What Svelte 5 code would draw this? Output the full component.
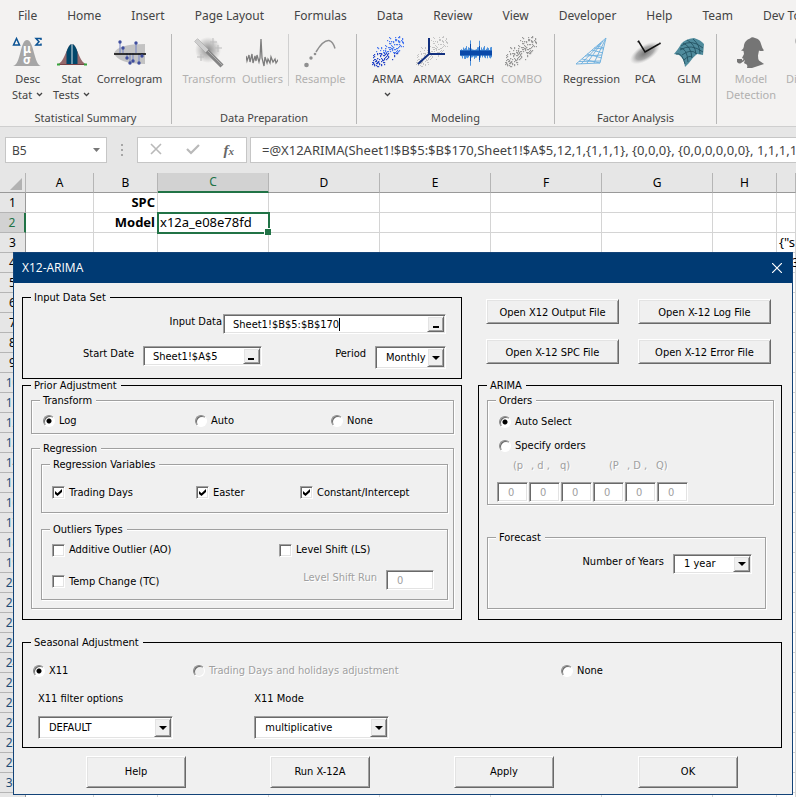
<script>
  const tabs = [
    "File",
    "Home",
    "Insert",
    "Page Layout",
    "Formulas",
    "Data",
    "Review",
    "View",
    "Developer",
    "Help",
    "Team",
    "Dev Tools",
  ];

  const groups = [
    {
      name: "Statistical Summary",
      items: [
        { lines: ["Desc", "Stat"], icon: "desc", menu: true },
        { lines: ["Stat", "Tests"], icon: "tests", menu: true },
        { lines: ["Correlogram"], icon: "correlogram" },
      ],
    },
    {
      name: "Data Preparation",
      items: [
        { lines: ["Transform"], icon: "wand", off: true },
        { lines: ["Outliers"], icon: "outliers", off: true },
        { lines: ["Resample"], icon: "resample", off: true, split: true },
      ],
    },
    {
      name: "Modeling",
      items: [
        { lines: ["ARMA", ""], icon: "arma", menu: true },
        { lines: ["ARMAX"], icon: "armax" },
        { lines: ["GARCH"], icon: "garch" },
        { lines: ["COMBO"], icon: "combo", off: true },
      ],
    },
    {
      name: "Factor Analysis",
      items: [
        { lines: ["Regression"], icon: "regression" },
        { lines: ["PCA"], icon: "pca" },
        { lines: ["GLM"], icon: "glm" },
      ],
    },
    {
      name: "",
      items: [
        { lines: ["Model", "Detection"], icon: "holmes", off: true },
        { lines: ["Diagnosis"], icon: "diagnosis", off: true },
      ],
    },
  ];

  const columns = ["A", "B", "C", "D", "E", "F", "G", "H", ""];
  const cells = {
    B1: "SPC",
    B2: "Model",
    C2: "x12a_e08e78fd",
    3: '{"s',
    4: "3",
  };
  const rowNumbers = Array.from({ length: 31 }, (_, i) => i + 1);

  // small fixed-seed generator, so the icons look the same on every load
  function random(seed) {
    let s = seed;
    return () => {
      s = (s * 16807) % 2147483647;
      return s / 2147483647;
    };
  }

  function scatter(seed, count) {
    const next = random(seed);
    const dots = [];
    while (dots.length < count) {
      const x = next() * 31;
      const spread = (next() + next() - 1) * 15;
      const y = 27 - x * 0.85 + spread;
      if (y > 0 && y < 31) dots.push({ x: Math.round(x), y: Math.round(y) });
    }
    return dots;
  }

  function noise(seed) {
    const next = random(seed);
    let d = "";
    for (let x = 0; x < 32; x++) {
      const spike = x === 10 ? 9 : x === 19 ? 8 : 0;
      const up = 2 + next() * 4 + spike;
      const down = 3 + next() * 4 + spike * 0.8;
      d += `M${x + 0.5} ${16 - up}V${16 + down}`;
    }
    return d;
  }

  const dots = scatter(4217, 165);
  const wave = noise(77);

  let transform = "Log";
  let orders = "auto";
  let seasonal = "X11";
  let inputData = "Sheet1!$B$5:$B$170";
  let startDate = "Sheet1!$A$5";
</script>

<div class="window">
  <header class="ribbon">
    <nav>
      {#each tabs as tab}
        <button class="tab">{tab}</button>
      {/each}
    </nav>
    <div class="groups">
      {#each groups as group}
        <section class="group">
          <div class="items">
            {#each group.items as item}
              <button class="item" class:split={item.split} disabled={item.off}>
                <svg width="32" height="32" viewBox="0 0 32 32" aria-hidden="true">
                  {#if item.icon === "desc"}
                    <path d="M1 30C9 29 8 4 15 4s7 25 14 26z" fill="#a6a6a6" />
                    <path d="M1.500 9 4.500 2.500 7.500 9z" fill="none" stroke="#0b5394" stroke-width="1.500" />
                    <path d="M29 4V2.500H24l3 3.300-3 3.200h5V7.500" fill="none" stroke="#0b5394" stroke-width="1.500" />
                    <text x="15" y="17" class="greek">μ</text>
                    <text x="15" y="28" class="greek">σ</text>
                  {:else if item.icon === "tests"}
                    <path d="M2 28C9 26 11 8 16 8s7 18 14 20z" fill="#96696c" />
                    <path d="M10.500 28V16Q13 8 16 8t5.500 8v12z" fill="#00476b" />
                    <path d="M16 8v20" stroke="#d8e4ea" />
                    <path d="M2 28.500h28" stroke="#7a4448" />
                    <path d="M1 28.500h3M28 28.500h3" stroke="#37a33c" stroke-width="2" />
                  {:else if item.icon === "correlogram"}
                    <path d="M0 17Q4 8 31 8V28Q4 28 0 17z" fill="#c3c3c3" />
                    <path d="M6 7v10M9 13v4M22 8v9M13 17v4M16 17v9M19 17v7M25 17v9M28 17v2" stroke="#7483c4" />
                    <path d="M0 18h32" stroke="#000" stroke-width="1.500" />
                    {#each [[6, 6], [9, 12], [22, 7], [13, 22], [16, 27], [19, 25], [25, 27], [28, 20]] as [x, y]}
                      <circle cx={x} cy={y} r="1.700" fill="#3f4e9e" />
                    {/each}
                  {:else if item.icon === "wand"}
                    <defs>
                      <radialGradient id="glow">
                        <stop offset="0" stop-color="#8c8c8c" />
                        <stop offset="1" stop-color="#8c8c8c" stop-opacity="0" />
                      </radialGradient>
                    </defs>
                    <circle cx="15" cy="14" r="13" fill="url(#glow)" />
                    <path d="M20 2v8M17 6h7M25 9v7M22 12h7M8 18v7M4 21h7" stroke="#bdbdbd" />
                    <path d="M3 4 29 30" stroke="#858585" stroke-width="4.500" />
                    <path d="M3 4 14 15" stroke="#cfcfcf" stroke-width="4" />
                    <path d="M14 14 29 29" stroke="#b0b0b0" />
                  {:else if item.icon === "outliers"}
                    <path
                      d="M0 20l1 5 2-6 1 7 2-8 1 9 2-7 1 5 1-6 2 7 1-4 1-19 1 19 2 8 1-9 2 6 1-4 2 4 1-6 2 5 2-3 1 4 2-3 2 2"
                      fill="none"
                      stroke="#7d7d7d"
                      stroke-width="1.300"
                    />
                  {:else if item.icon === "resample"}
                    <path d="M12 16Q19 4 25 4.500q4 1 6 8" fill="none" stroke="#8f8f8f" stroke-width="1.500" />
                    <circle cx="2.500" cy="29" r="2.300" fill="#8f8f8f" />
                    <circle cx="7" cy="22" r="1.700" fill="#8f8f8f" />
                    <circle cx="11" cy="18" r="1.300" fill="#8f8f8f" />
                  {:else if item.icon === "arma" || item.icon === "combo"}
                    {#each dots as dot}
                      <rect
                        x={dot.x}
                        y={dot.y}
                        width="1.200"
                        height="1.200"
                        fill={item.icon === "combo" ? "#999" : dot.y > 16 ? "#2948c8" : "#4a7af0"}
                      />
                    {/each}
                  {:else if item.icon === "armax"}
                    {#each dots as dot}
                      <rect x={dot.x} y={dot.y} width="1" height="1" fill="#c4c4c4" />
                    {/each}
                    <path d="M13 2v16h16M13 18 2 28" fill="none" stroke="#12307f" stroke-width="2" />
                  {:else if item.icon === "garch"}
                    <path d={wave} stroke="#4f93dc" />
                    <path d="M0 17h32" stroke="#0a48a8" stroke-width="5" />
                    <path d="M10.500 8v17M19.500 10v14" stroke="#0a48a8" />
                  {:else if item.icon === "regression"}
                    <path
                      d="M1 28 31 2 25 27zM7 23l18 4M12 18l15 4M17 14l11 3M22 10l7 2M6 28l20-21M12 27 28 5M19 27 30 4M4 25.500l22-.5M10 20l17-1M19 12l10 1"
                      fill="none"
                      stroke="#6aaede"
                      stroke-width=".9"
                    />
                  {:else if item.icon === "pca"}
                    <defs>
                      <radialGradient id="cloud">
                        <stop offset="0" stop-color="#777" />
                        <stop offset=".6" stop-color="#aaa" />
                        <stop offset="1" stop-color="#ccc" stop-opacity="0" />
                      </radialGradient>
                    </defs>
                    <ellipse cx="16" cy="17" rx="17" ry="8" fill="url(#cloud)" transform="rotate(-32 16 17)" />
                    <path d="M10 6l6 10 14-8" fill="none" stroke="#111" stroke-width="1.500" />
                    <path d="M10 4l-2 2 3 1zM31 6l-2 3 3-1z" fill="#111" />
                  {:else if item.icon === "glm"}
                    <path d="M1 18Q6 12 8 8 12 3 21 2q7 2 10 6l-1 11-6-1q-5 4-8 9l-4 4q-1-9-6-12z" fill="#4f8b9c" />
                    <path
                      d="M3 18q6-2 9 10M7 12q7 0 8 14M10 7q8 3 9 15M14 4q8 4 9 14M20 3q7 6 7 15M8 10Q18 2 30 12M7 14Q18 7 30 16M9 19Q18 12 24 18M11 24q5-5 8-3"
                      fill="none"
                      stroke="#1f4c5c"
                      stroke-width=".8"
                    />
                  {:else if item.icon === "holmes"}
                    <path
                      d="M6 14.500Q9 13 9 9q1-5 6-6.500 2-2 5-.5 5 1 6 6 1 4 3 6.500-3 1-5 0l-1 5q0 4 1 5l5 3.500L17 32h-5q1-3-1-4-2 0-2-2l1-1-1-2-2-1 2-4-.5-3z"
                      fill="#757575"
                    />
                    <path d="M10 22.500Q7 27 5 25" fill="none" stroke="#757575" stroke-width="1.500" />
                    <path d="M2 23h5v3q-2 3-5 0z" fill="#757575" />
                  {:else}
                    <circle cx="5" cy="5" r="4" fill="none" stroke="#b5b5b5" stroke-width="2" />
                    <path d="M2 25h7M2 29h9" stroke="#c5c5c5" stroke-width="2" />
                  {/if}
                </svg>
                {#each item.lines as line, i}
                  <span class="line">
                    {line}
                    {#if item.menu && i === item.lines.length - 1}
                      <svg width="7" height="5" viewBox="0 0 7 5" aria-hidden="true">
                        <path d="M1 1l2.500 2.500L6 1" fill="none" stroke="#444" stroke-width="1.300" />
                      </svg>
                    {/if}
                  </span>
                {/each}
              </button>
            {/each}
          </div>
          <h2>{group.name}</h2>
        </section>
      {/each}
    </div>
  </header>

  <div class="formula-bar">
    <button class="name-box">
      B5
      <svg width="7" height="4" viewBox="0 0 7 4" aria-hidden="true"><path d="M0 0h7L3.500 4z" fill="#777" /></svg>
    </button>
    <svg class="grip" width="2" height="12" viewBox="0 0 2 12" aria-hidden="true">
      <path d="M0 0h2v2H0zM0 5h2v2H0zM0 10h2v2H0z" fill="#a6a6a6" />
    </svg>
    <div class="entry">
      <button aria-label="Cancel">
        <svg width="12" height="12" viewBox="0 0 12 12"><path d="M1 1l10 10M11 1 1 11" stroke="#b9b9b9" stroke-width="1.600" /></svg>
      </button>
      <button aria-label="Enter">
        <svg width="14" height="12" viewBox="0 0 14 12"><path d="M1 6l4 4 8-8" fill="none" stroke="#b9b9b9" stroke-width="2.200" /></svg>
      </button>
      <button class="fx" aria-label="Insert function">f<small>x</small></button>
    </div>
    <input
      class="formula"
      aria-label="Formula"
      value={"=@X12ARIMA(Sheet1!$B$5:$B$170,Sheet1!$A$5,12,1,{1,1,1}, {0,0,0}, {0,0,0,0,0,0}, 1,1,1,1)"}
    />
  </div>

  <main>
    <table>
      <colgroup>
        <col class="w-head" />
        <col class="w-a" />
        <col class="w-b" />
        <col class="w-wide" span="5" />
        <col class="w-b" />
        <col />
      </colgroup>
      <thead>
        <tr>
          <th class="corner">
            <svg width="12" height="12" viewBox="0 0 12 12" aria-hidden="true"><path d="M12 0v12H0z" fill="#b2b2b2" /></svg>
          </th>
          {#each columns as column}
            <th class:current={column === "C"}>{column}</th>
          {/each}
        </tr>
      </thead>
      <tbody>
        {#each rowNumbers as row}
          <tr>
            <th class:current={row === 2} class:filtered={row > 9}>{row}</th>
            {#each columns as column}
              <td
                class:bold={column === "B"}
                class:selected={column === "C" && row === 2}
                class:far={column === "" && row === 4}>{cells[column + row] ?? ""}</td
              >
            {/each}
          </tr>
        {/each}
      </tbody>
    </table>
  </main>

  <form class="dialog" on:submit|preventDefault>
    <div class="title">
      <h1>X12-ARIMA</h1>
      <button type="button" aria-label="Close">
        <svg width="10" height="10" viewBox="0 0 10 10"><path d="M0 0l10 10M10 0 0 10" stroke="#fff" stroke-width="1.200" /></svg>
      </button>
    </div>

    <div class="body">
      <fieldset class="input-set">
        <legend>Input Data Set</legend>
        <div class="row end">
          <label for="input-data">Input Data</label>
          <div class="sunken ref wide">
            <input id="input-data" class="typing" bind:value={inputData} />
            <i class="caret"></i>
            <button type="button" class="raised pick" aria-label="Select range"><i></i></button>
          </div>
        </div>
        <div class="row between">
          <div class="row start-date">
            <label for="start-date">Start Date</label>
            <div class="sunken ref short">
              <input id="start-date" bind:value={startDate} />
              <button type="button" class="raised pick" aria-label="Select cell"><i></i></button>
            </div>
          </div>
          <div class="row period">
            <label for="period">Period</label>
            <div class="sunken combo small">
              <select id="period"><option>Monthly</option><option>Quarterly</option></select>
              <span class="raised drop"></span>
            </div>
          </div>
        </div>
      </fieldset>

      <div class="files">
        <button type="button" class="raised">Open X12 Output File</button>
        <button type="button" class="raised">Open X-12 Log File</button>
        <button type="button" class="raised">Open X-12 SPC File</button>
        <button type="button" class="raised">Open X-12 Error File</button>
      </div>

      <fieldset class="prior">
        <legend>Prior Adjustment</legend>
        <fieldset class="etched transform">
          <legend>Transform</legend>
          {#each ["Log", "Auto", "None"] as option}
            <label><input type="radio" name="transform" value={option} bind:group={transform} />{option}</label>
          {/each}
        </fieldset>
        <fieldset class="etched regression">
          <legend>Regression</legend>
          <fieldset class="etched variables">
            <legend>Regression Variables</legend>
            <label><input type="checkbox" checked />Trading Days</label>
            <label><input type="checkbox" checked />Easter</label>
            <label><input type="checkbox" checked />Constant/Intercept</label>
          </fieldset>
          <fieldset class="etched types">
            <legend>Outliers Types</legend>
            <label><input type="checkbox" />Additive Outlier (AO)</label>
            <label><input type="checkbox" />Level Shift (LS)</label>
            <label><input type="checkbox" />Temp Change (TC)</label>
            <div class="row run">
              <label class="off" for="run">Level Shift Run</label>
              <input id="run" class="sunken number" value="0" disabled />
            </div>
          </fieldset>
        </fieldset>
      </fieldset>

      <fieldset class="arima">
        <legend>ARIMA</legend>
        <fieldset class="etched orders">
          <legend>Orders</legend>
          <label><input type="radio" name="orders" value="auto" bind:group={orders} />Auto Select</label>
          <label><input type="radio" name="orders" value="specify" bind:group={orders} />Specify orders</label>
          <div class="names off">
            <span>(p</span><span>, d ,</span><span>q)</span><span>(P</span><span>, D ,</span><span>Q)</span>
          </div>
          <div class="numbers">
            {#each ["p", "d", "q", "P", "D", "Q"] as name}
              <input class="sunken number" aria-label={name} value="0" disabled />
            {/each}
          </div>
        </fieldset>
        <fieldset class="etched forecast">
          <legend>Forecast</legend>
          <div class="row end">
            <label for="years">Number of Years</label>
            <div class="sunken combo years">
              <select id="years"><option>1 year</option><option>2 years</option></select>
              <span class="raised drop"></span>
            </div>
          </div>
        </fieldset>
      </fieldset>

      <fieldset class="seasonal">
        <legend>Seasonal Adjustment</legend>
        <div class="methods">
          <label><input type="radio" name="seasonal" value="X11" bind:group={seasonal} />X11</label>
          <label class="off">
            <input type="radio" name="seasonal" value="holidays" bind:group={seasonal} disabled />Trading Days and holidays
            adjustment
          </label>
          <label><input type="radio" name="seasonal" value="None" bind:group={seasonal} />None</label>
        </div>
        <div class="options">
          <div>
            <label for="filter">X11 filter options</label>
            <div class="sunken combo">
              <select id="filter"><option>DEFAULT</option></select>
              <span class="raised drop"></span>
            </div>
          </div>
          <div>
            <label for="mode">X11 Mode</label>
            <div class="sunken combo">
              <select id="mode"><option>multiplicative</option><option>additive</option></select>
              <span class="raised drop"></span>
            </div>
          </div>
        </div>
      </fieldset>
    </div>

    <footer>
      <button type="button" class="raised">Help</button>
      <button type="button" class="raised">Run X-12A</button>
      <button type="button" class="raised">Apply</button>
      <button type="submit" class="raised">OK</button>
    </footer>
  </form>
</div>

<style>
  :global(body) {
    margin: 0;
    background: #fff;
  }

  * {
    box-sizing: border-box;
  }

  button,
  input,
  select {
    font: inherit;
    color: inherit;
    margin: 0;
    padding: 0;
    border: none;
    border-radius: 0;
    background: none;
    outline: none;
  }

  .window {
    position: relative;
    height: 100vh;
    overflow: hidden;
    font-family: "Noto Sans", "Open Sans", sans-serif;
    font-size: 12px;
    color: #444;
  }

  /* ribbon */
  .ribbon {
    background: #f3f2f1;
    border-bottom: 1px solid #cfcfcf;
    padding-bottom: 2px;
  }

  nav {
    display: flex;
    gap: 30px;
    padding-left: 18px;
    height: 34px;
  }

  .tab {
    height: 31px;
    white-space: nowrap;
  }

  .groups {
    display: grid;
    grid-template-columns: 172px 185px 198px 162px 1fr;
    height: 90px;
  }

  .group {
    display: flex;
    flex-direction: column;
    justify-content: space-between;
    border-right: 1px solid #b8b8b8;
    min-width: 0;
  }

  .group:last-child {
    border-right: none;
  }

  .items {
    display: flex;
    justify-content: center;
    gap: 4px;
    font-size: 11px;
  }

  .group:last-child .items {
    justify-content: flex-start;
    gap: 8px;
    padding-left: 8px;
  }

  .item {
    display: flex;
    flex: none;
    flex-direction: column;
    align-items: center;
    min-width: 40px;
    padding: 2px 1px 0;
  }

  .item > svg {
    flex: none;
  }

  .item:disabled {
    color: #b1b0af;
  }

  .item.split {
    padding-left: 6px;
    border-left: 1px solid #d0d0d0;
  }

  .greek {
    fill: #fff;
    font-size: 12px;
    font-weight: 700;
    text-anchor: middle;
  }

  .line {
    display: flex;
    align-items: center;
    gap: 4px;
    height: 16px;
    margin-top: 2px;
    white-space: nowrap;
  }

  .item .line + .line {
    margin-top: 0;
  }

  h2 {
    margin: 0;
    font-size: 11px;
    line-height: 12px;
    font-weight: 400;
    text-align: center;
  }

  /* formula bar */
  .formula-bar {
    display: flex;
    align-items: center;
    height: 46px;
    padding-left: 5px;
    background: #e6e6e6;
    font-size: 13px;
  }

  .name-box,
  .entry,
  .formula {
    height: 26px;
    background: #fff;
    border: 1px solid #c6c6c6;
  }

  .name-box {
    display: flex;
    align-items: center;
    justify-content: space-between;
    width: 102px;
    padding: 0 6px;
    font-size: 12px;
  }

  .grip {
    margin: 0 14px;
  }

  .entry {
    display: flex;
    align-items: center;
    justify-content: space-around;
    width: 110px;
    margin-right: 3px;
  }

  .fx {
    font-family: "Liberation Serif", serif;
    font-style: italic;
    font-weight: 700;
    font-size: 15px;
    line-height: 20px;
    color: #666;
  }

  .fx small {
    font-size: 11px;
  }

  .formula {
    flex: 1;
    min-width: 0;
    padding-left: 11px;
    border-right: none;
  }

  /* sheet */
  main {
    overflow: hidden;
  }

  table {
    width: 100%;
    table-layout: fixed;
    border-collapse: separate;
    border-spacing: 0;
    font-size: 13px;
    color: #000;
  }

  .w-head {
    width: 26px;
  }

  .w-a {
    width: 68px;
  }

  .w-b {
    width: 64px;
  }

  .w-wide {
    width: 111px;
  }

  th,
  td {
    height: 20px;
    padding: 0 2px;
    line-height: 19px;
    border-right: 1px solid #d4d4d4;
    border-bottom: 1px solid #d4d4d4;
    white-space: nowrap;
  }

  th {
    padding: 0;
    font-size: 12px;
    font-weight: 400;
    background: #e6e6e6;
    border-color: #b5b5b5;
  }

  thead th {
    border-bottom-color: #999;
  }

  tbody th {
    border-right-color: #999;
  }

  thead th.current {
    background: #d2d2d2;
    color: #217346;
    border-bottom: 2px solid #217346;
    line-height: 18px;
  }

  tbody th.current {
    background: #d2d2d2;
    color: #217346;
    border-right: 2px solid #217346;
  }

  th.filtered {
    color: #1f4e79;
  }

  .corner svg {
    display: block;
    margin: 2px 3px 0 auto;
  }

  td.bold {
    font-weight: 700;
    text-align: right;
  }

  td.selected {
    position: relative;
    outline: 2px solid #217346;
    outline-offset: -1px;
  }

  td.selected::after {
    content: "";
    position: absolute;
    right: -3px;
    bottom: -3px;
    width: 6px;
    height: 6px;
    background: #217346;
    border: 1px solid #fff;
    border-right: none;
    border-bottom: none;
  }

  td.far {
    padding-left: 15px;
  }

  /* dialog */
  .dialog {
    position: absolute;
    top: 252px;
    left: 13px;
    right: 3px;
    border: 1px solid #134378;
    background: #f0f0f0;
    font-family: "DejaVu Sans Condensed", "DejaVu Sans", sans-serif;
    font-size: 11px;
    line-height: 14px;
    color: #000;
  }

  .title {
    display: flex;
    align-items: center;
    justify-content: space-between;
    height: 30px;
    padding: 0 10px 0 8px;
    background: #003a73;
    color: #fff;
  }

  h1 {
    margin: 0;
    font: 400 12px/16px "Open Sans", sans-serif;
  }

  .title svg {
    display: block;
  }

  .body {
    display: grid;
    grid-template-columns: 440fr 304fr;
    column-gap: 16px;
    padding: 8px 10px 0 8px;
  }

  /* --inset keeps the legend in place whatever the left padding is */
  fieldset {
    --inset: 0px;
    min-width: 0;
    margin: 0;
    padding: 0;
    padding-left: var(--inset);
    border: 1px solid #000;
  }

  legend {
    margin-left: calc(8px - var(--inset));
    padding: 0 4px 0 3px;
    line-height: 13px;
    background: #f0f0f0;
  }

  .etched {
    border-color: #a0a0a0;
    box-shadow:
      1px 1px 0 #fff,
      inset 1px 1px 0 #fff;
  }

  .sunken {
    background: #fff;
    border: 1px solid;
    border-color: #a0a0a0 #fff #fff #a0a0a0;
    box-shadow:
      inset 1px 1px 0 #696969,
      inset -1px -1px 0 #e3e3e3;
  }

  .raised {
    background: #f0f0f0;
    border: 1px solid;
    border-color: #fff #696969 #696969 #fff;
    box-shadow:
      inset 1px 1px 0 #e3e3e3,
      inset -1px -1px 0 #a0a0a0;
  }

  .off {
    color: #a0a0a0;
    text-shadow: 1px 1px 0 #fff;
  }

  .row {
    display: flex;
    align-items: flex-start;
    line-height: 16px;
  }

  .end {
    justify-content: flex-end;
  }

  .between {
    justify-content: space-between;
  }

  .input-set {
    --inset: 60px;
    padding-top: 10px;
    padding-right: 15px;
    padding-bottom: 9px;
  }

  .input-set .end {
    gap: 1px;
    margin-bottom: 12px;
  }

  .start-date,
  .period {
    gap: 9px;
  }

  .ref,
  .combo {
    display: flex;
    padding: 1px;
  }

  .ref {
    height: 20px;
  }

  .ref input {
    flex: 1;
    min-width: 0;
    padding: 2px 0 0 8px;
  }

  .ref .typing {
    flex: none;
    field-sizing: content;
  }

  .caret {
    width: 1px;
    height: 13px;
    margin: 2px auto 0 0;
    background: #000;
  }

  .wide {
    width: 223px;
  }

  .short {
    width: 119px;
  }

  .pick {
    display: flex;
    align-items: flex-end;
    justify-content: center;
    width: 17px;
    padding-bottom: 3px;
  }

  .pick i {
    width: 6px;
    height: 2px;
    background: #000;
  }

  .combo {
    width: 135px;
    height: 23px;
  }

  .combo select {
    flex: 1;
    min-width: 0;
    padding-left: 9px;
    appearance: none;
  }

  .combo.small {
    width: 71px;
  }

  .combo.years {
    width: 79px;
    height: 20px;
  }

  .drop {
    display: flex;
    align-items: center;
    justify-content: center;
    width: 17px;
    pointer-events: none;
  }

  .drop::before {
    content: "";
    border: 4px solid transparent;
    border-top-color: #000;
    border-bottom: none;
  }

  .files {
    display: grid;
    grid-template-columns: 133px 133px;
    grid-auto-rows: 25px;
    gap: 15px 19px;
    padding: 8px 0 0 8px;
  }

  .files .raised {
    padding-top: 2px;
  }

  .prior {
    --inset: 8px;
    padding-top: 2px;
    padding-right: 7px;
    padding-bottom: 9px;
  }

  label {
    display: flex;
    align-items: center;
    white-space: nowrap;
  }

  input[type="radio"] {
    flex: none;
    width: 12px;
    height: 12px;
    margin-right: 4px;
    appearance: none;
    border: 1px solid;
    border-color: #8a8a8a #fff #fff #8a8a8a;
    border-radius: 50%;
    background: #fff;
    box-shadow: inset 1px 1px 0 #696969;
  }

  input[type="radio"]:checked {
    background: radial-gradient(circle at 5px 5px, #000 2px, #fff 3px);
  }

  input[type="radio"]:disabled {
    background: #f0f0f0;
  }

  input[type="checkbox"] {
    flex: none;
    width: 13px;
    height: 13px;
    margin-right: 4px;
    appearance: none;
    background: #fff;
    border: 1px solid;
    border-color: #a0a0a0 #fff #fff #a0a0a0;
    box-shadow:
      inset 1px 1px 0 #696969,
      inset -1px -1px 0 #e3e3e3;
  }

  input[type="checkbox"]:checked::before {
    content: "";
    display: block;
    width: 7px;
    height: 7px;
    margin: 2px;
    background: #000;
    clip-path: polygon(0 30%, 36% 62%, 100% 0, 100% 42%, 36% 100%, 0 72%);
  }

  .transform label,
  .variables label,
  .orders label,
  .methods label {
    padding-top: 2px;
  }

  .transform {
    --inset: 11px;
    display: grid;
    grid-template-columns: 152fr 136fr 122fr;
    margin-bottom: 8px;
  }

  .transform label {
    height: 26px;
  }

  .regression {
    --inset: 9px;
    padding-top: 3px;
    padding-right: 5px;
    padding-bottom: 8px;
  }

  .variables {
    --inset: 10px;
    display: grid;
    grid-template-columns: 144fr 104fr 147fr;
    margin-bottom: 10px;
  }

  .variables label {
    height: 41px;
  }

  .types {
    --inset: 10px;
    display: grid;
    grid-template-columns: 227fr 168fr;
    grid-template-rows: 28px 35px;
  }

  .run {
    justify-content: flex-end;
    gap: 9px;
    padding: 6px 13px 0 0;
  }

  .number {
    height: 20px;
    padding-left: 10px;
    color: #a0a0a0;
  }

  .run .number {
    width: 48px;
  }

  .arima {
    --inset: 8px;
    padding-top: 2px;
    padding-right: 7px;
    padding-bottom: 10px;
  }

  .orders {
    --inset: 11px;
    padding-top: 2px;
    padding-bottom: 2px;
    margin-bottom: 26px;
  }

  .orders label {
    height: 24px;
  }

  .names {
    display: grid;
    grid-template-columns: 18px 29px 49px 18px 29px 1fr;
    height: 25px;
    padding-left: 14px;
    line-height: 18px;
  }

  .numbers {
    display: grid;
    grid-template-columns: repeat(6, 31px);
    gap: 1px;
    margin-left: -2px;
  }

  .forecast {
    margin-right: 8px;
    padding: 10px 13px 34px 0;
  }

  .forecast .end {
    gap: 9px;
  }

  .seasonal {
    --inset: 10px;
    grid-column: 1 / -1;
    margin-top: 16px;
    padding-top: 9px;
    padding-right: 10px;
    padding-bottom: 8px;
  }

  .methods {
    display: grid;
    grid-template-columns: 160fr 368fr 210fr;
    height: 28px;
  }

  .methods label {
    height: 24px;
  }

  .options {
    display: grid;
    grid-template-columns: 216fr 516fr;
    padding: 6px 0 0 5px;
  }

  .options label {
    margin-bottom: 10px;
  }

  footer {
    display: flex;
    justify-content: space-between;
    padding: 8px 54px 6px 72px;
  }

  footer .raised {
    width: 100px;
    height: 32px;
  }
</style>
